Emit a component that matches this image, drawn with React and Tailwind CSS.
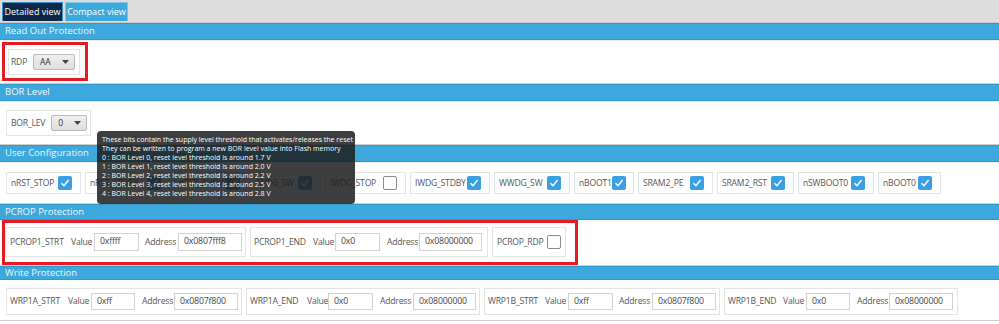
import React from "react";

const FONT = { fontFamily: '"Open Sans", "Noto Sans", sans-serif' };
const LBL = { fontFamily: '"Open Sans", "Noto Sans", sans-serif', fontSize: "8.6px", letterSpacing: "-0.2px" };

function Check({ checked }) {
  if (checked) {
    return (
      <div className="w-[14px] h-[14px] rounded-[2px] bg-[#3a9fe3] flex items-center justify-center shrink-0">
        <svg width="10" height="10" viewBox="0 0 10 10">
          <path d="M1.5 5.2 L4 7.8 L8.6 2" stroke="white" strokeWidth="1.4" fill="none" />
        </svg>
      </div>
    );
  }
  return <div className="w-[14px] h-[14px] rounded-[2px] border border-[#8a8a8a] bg-white shrink-0" />;
}

function Header({ title, h }) {
  return (
    <div
      className="bg-[#3ca8dc] border-t border-b border-[#3398cc] text-[#eef7fc] text-[9.5px] pl-[5px] flex items-center whitespace-nowrap"
      style={{ height: h }}
    >
      {title}
    </div>
  );
}

function Select({ value, w }) {
  return (
    <div
      className="h-[16px] border border-[#b9b9b9] rounded-[2px] bg-gradient-to-b from-[#f0f0f0] to-[#dedede] flex items-center pl-[6px] pr-[5px] text-[#333]"
      style={{ width: w, ...LBL }}
    >
      <span className="flex-1">{value}</span>
      <svg width="7" height="4" viewBox="0 0 7 4">
        <path d="M0 0 L7 0 L3.5 4 Z" fill="#444" />
      </svg>
    </div>
  );
}

function CheckGroup({ label, checked, w }) {
  return (
    <div
      className="h-[22px] border border-[#e4e4e4] bg-white flex items-center pl-[4px] pr-[8px] shrink-0"
      style={{ width: w }}
    >
      <span className="flex-1 text-[#555] whitespace-nowrap" style={LBL}>{label}</span>
      <Check checked={checked} />
    </div>
  );
}

function Input({ value, w, h }) {
  return (
    <div
      className="border border-[#d2d2d2] bg-white text-[8.8px] text-[#444] flex items-center pl-[5px] shrink-0 whitespace-nowrap"
      style={{ width: w, height: h, ...FONT }}
    >
      {value}
    </div>
  );
}

function ValAddr({ label, lw, vw, value, addr, gap, aw, h, ih, pl, pr, iw1, iw2 }) {
  return (
    <div
      className="border border-[#e4e4e4] bg-white flex items-center shrink-0 text-[#555] whitespace-nowrap"
      style={{ height: h, paddingLeft: pl, paddingRight: pr, ...LBL }}
    >
      <span className="shrink-0" style={{ width: lw }}>{label}</span>
      <span className="shrink-0" style={{ width: vw }}>Value</span>
      <Input value={value} w={iw1} h={ih} />
      <span className="shrink-0" style={{ width: aw, marginLeft: gap }}>Address</span>
      <Input value={addr} w={iw2} h={ih} />
    </div>
  );
}

export default function App() {
  const userCfg = [
    ["nRST_STOP", true, 75],
    ["nRST_STDBY", true, 85],
    ["nRST_SHDW", true, 73],
    ["IWDG_SW", true, 70],
    ["IWDG_STOP", false, 81],
    ["IWDG_STDBY", true, 80],
    ["WWDG_SW", true, 76],
    ["nBOOT1", true, 60],
    ["SRAM2_PE", true, 75],
    ["SRAM2_RST", true, 77],
    ["nSWBOOT0", true, 76],
    ["nBOOT0", true, 63],
  ];

  return (
    <div className="relative w-[999px] h-[324px] bg-white overflow-hidden" style={FONT}>
      {/* Tabs bar */}
      <div className="h-[23px] bg-[#dcdcdc] border-b border-[#c8c8c8] flex items-end pl-[2px] gap-[2px]">
        <div className="h-[19px] w-[61px] bg-[#0c2747] border border-[#3a8fc4] border-b-0 text-white text-[9px] flex items-center justify-center mb-[1px] whitespace-nowrap">
          Detailed view
        </div>
        <div className="h-[19px] w-[63px] bg-[#3ca8dc] border border-[#7cc6ea] border-b-0 text-white text-[9px] flex items-center justify-center mb-[1px] whitespace-nowrap">
          Compact view
        </div>
      </div>

      {/* Read Out Protection */}
      <Header title="Read Out Protection" h={17} />
      <div className="h-[44px] border-t border-[#ececec] border-b border-b-[#cfcfcf] pl-[2px] pt-[1px]">
        <div className="w-[86px] h-[39px] border-[3px] border-[#e51b24] pl-[3px] pt-[4px]">
          <div className="w-[72px] h-[26px] border border-[#e4e4e4] flex items-center pl-[2px] gap-[6px]">
            <span className="text-[#555]" style={LBL}>RDP</span>
            <Select value="AA" w={42} />
          </div>
        </div>
      </div>

      {/* BOR Level */}
      <Header title="BOR Level" h={17} />
      <div className="h-[44px] border-t border-[#ececec] border-b border-b-[#cfcfcf] pl-[6px] pt-[8px]">
        <div className="w-[85px] h-[26px] border border-[#e4e4e4] flex items-center pl-[4px] gap-[6px]">
          <span className="text-[#555] whitespace-nowrap" style={LBL}>BOR_LEV</span>
          <Select value="0" w={36} />
        </div>
      </div>

      {/* User Configuration */}
      <Header title="User Configuration" h={17} />
      <div className="h-[42px] border-t border-[#ececec] border-b border-b-[#cfcfcf] pl-[6px] pt-[9px] flex gap-[4px]">
        {userCfg.map(([l, c, w]) => (
          <CheckGroup key={l} label={l} checked={c} w={w} />
        ))}
      </div>

      {/* PCROP Protection */}
      <Header title="PCROP Protection" h={16} />
      <div className="h-[46px] border-b border-[#cfcfcf] pl-[2px]">
        <div className="w-[576px] h-[45px] border-[3px] border-[#e51b24] flex items-start gap-[4px] pt-[4px]">
          <ValAddr label="PCROP1_STRT" lw={61} vw={23} value="0xffff" addr="0x0807fff8" gap={6} aw={33} h={30} ih={18} pl={4} pr={3} iw1={45} iw2={64} />
          <ValAddr label="PCROP1_END" lw={59} vw={22} value="0x0" addr="0x08000000" gap={7} aw={32} h={30} ih={18} pl={3} pr={5} iw1={45} iw2={63} />
          <div className="h-[30px] w-[74px] border border-[#e4e4e4] flex items-center pl-[4px] pr-[4px]">
            <span className="flex-1 text-[#555] whitespace-nowrap" style={LBL}>PCROP_RDP</span>
            <Check checked={false} />
          </div>
        </div>
      </div>

      {/* Write Protection */}
      <Header title="Write Protection" h={14} />
      <div className="h-[41px] border-b border-[#cfcfcf] pl-[6px] pt-[8px] flex items-start gap-[4px]">
        <ValAddr label="WRP1A_STRT" lw={58} vw={23} value="0xff" addr="0x0807f800" gap={7} aw={32} h={27} ih={17} pl={3} pr={3} iw1={44} iw2={64} />
        <ValAddr label="WRP1A_END" lw={57} vw={21} value="0x0" addr="0x08000000" gap={7} aw={33} h={27} ih={17} pl={3} pr={3} iw1={45} iw2={63} />
        <ValAddr label="WRP1B_STRT" lw={57} vw={23} value="0xff" addr="0x0807f800" gap={6} aw={33} h={27} ih={17} pl={3} pr={3} iw1={45} iw2={64} />
        <ValAddr label="WRP1B_END" lw={55} vw={23} value="0x0" addr="0x08000000" gap={7} aw={32} h={27} ih={17} pl={3} pr={4} iw1={44} iw2={64} />
      </div>

      {/* Tooltip */}
      <div className="absolute left-[97px] top-[131px] w-[258px] h-[73px] rounded-[4px] bg-[rgba(28,30,32,0.86)] text-white text-[7px] leading-[9px] pl-[5px] pt-[4px] whitespace-nowrap">
        <div>These bits contain the supply level threshold that activates/releases the reset</div>
        <div>They can be written to program a new BOR level value into Flash memory</div>
        <div>0 : BOR Level 0, reset level threshold is around 1.7 V</div>
        <div>1 : BOR Level 1, reset level threshold is around 2.0 V</div>
        <div>2 : BOR Level 2, reset level threshold is around 2.2 V</div>
        <div>3 : BOR Level 3, reset level threshold is around 2.5 V</div>
        <div>4 : BOR Level 4, reset level threshold is around 2.8 V</div>
      </div>
    </div>
  );
}
